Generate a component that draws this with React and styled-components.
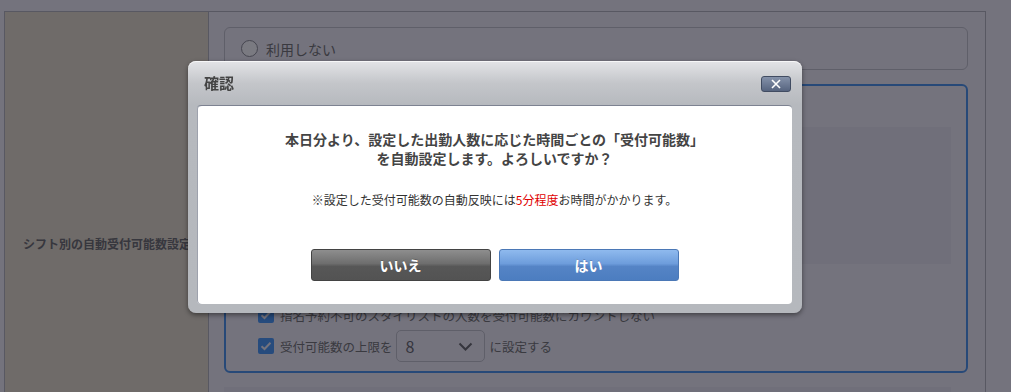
import React from "react";
import styled, { createGlobalStyle } from "styled-components";

const GlobalStyle = createGlobalStyle`
  html, body {
    margin: 0;
    padding: 0;
    background: #e8e6f0;
    font-family: "Noto Sans CJK JP", "Noto Sans", sans-serif;
    overflow: hidden;
  }
`;

const Page = styled.div`
  padding: 11px 0 0 4px;
`;

const Table = styled.div`
  width: 980px;
  display: flex;
  border: 1px solid #b0b0ba;
  border-bottom: none;
`;

const LabelCell = styled.div`
  width: 185px;
  flex-shrink: 0;
  padding: 0 0 0 18px;
  background: #ded6c8;
  border-right: 1px solid #b0b0ba;
  display: flex;
  align-items: center;
  white-space: nowrap;
  font-size: 12px;
  font-weight: bold;
  color: #6e6e72;
`;

const ValueCell = styled.div`
  flex: 1;
  padding: 15px 17px 15px 15px;
  display: flex;
  flex-direction: column;
  gap: 14px;
`;

const Panel = styled.div`
  border: ${(p) => (p.$active ? "2px solid #4f92e6" : "1px solid #bebec8")};
  border-radius: 6px;
  padding: ${(p) => p.$pad || "0 16px"};
  display: flex;
  flex-direction: column;
`;

const RadioRow = styled.label`
  display: flex;
  align-items: center;
  gap: 8px;
  height: ${(p) => p.$h || 41}px;
  font-size: 14px;
  color: #747476;
`;

const RadioCircle = styled.span`
  width: 15px;
  height: 15px;
  border-radius: 50%;
  border: 1px solid #8c8c96;
  background: #f4f4f8;
`;

const GrayBox = styled.div`
  height: ${(p) => p.$h || 137}px;
  margin: ${(p) => p.$margin || "9px 15px 6px -17px"};
  background: #e0deea;
`;

const CheckRow = styled.div`
  display: flex;
  align-items: center;
  gap: 6px;
  height: ${(p) => p.$h || 30}px;
  font-size: 12.5px;
  color: #747476;
  white-space: nowrap;
`;

const CheckBox = styled.span`
  width: 16px;
  height: 16px;
  border-radius: 2px;
  background: #4c96f0;
  display: flex;
  align-items: center;
  justify-content: center;
`;

const Select = styled.div`
  box-sizing: border-box;
  width: 89px;
  height: 32px;
  margin: 0 -1px 0 -3px;
  border: 1px solid #bebec8;
  border-radius: 5px;
  display: flex;
  align-items: center;
  justify-content: space-between;
  padding: 0 11px 0 9px;
  font-size: 16px;
  color: #6a6a70;
`;

const Overlay = styled.div`
  position: fixed;
  inset: 0;
  background: rgba(0, 0, 10, 0.5);
`;

const Dialog = styled.div`
  position: fixed;
  left: 188px;
  top: 61px;
  width: 614px;
  height: 252px;
  box-sizing: border-box;
  border-radius: 8px;
  background: linear-gradient(#e3e4e7 0px, #c4c6ca 22px, #b6b9be 44px, #b5b8bd 100%);
  box-shadow: 0 2px 5px rgba(0, 0, 0, 0.45), inset 0 1px 0 rgba(255, 255, 255, 0.7);
  display: flex;
  flex-direction: column;
  padding: 0 10px 9px 9px;
`;

const DialogHeader = styled.div`
  height: 44px;
  display: flex;
  align-items: center;
  justify-content: space-between;
  padding: 0 1px 0 7px;
`;

const DialogTitle = styled.div`
  font-size: 15px;
  font-weight: bold;
  color: #444;
  margin-top: -1px;
`;

const CloseButton = styled.button`
  width: 30px;
  height: 16px;
  padding: 0;
  border: 1px solid #414c62;
  border-radius: 3px;
  background: linear-gradient(#8592aa, #56647f);
  display: flex;
  align-items: center;
  justify-content: center;
  margin-top: 1px;
`;

const DialogBody = styled.div`
  flex: 1;
  background: #fff;
  border-radius: 4px;
  border-top: 1px solid #7d8291;
  box-shadow: inset 1px 0 0 #9ea2ad;
  display: flex;
  flex-direction: column;
  align-items: center;
  padding-top: 24px;
`;

const Message = styled.p`
  margin: 0;
  font-size: 14px;
  font-weight: bold;
  line-height: 19px;
  color: #444;
  text-align: center;
`;

const Note = styled.p`
  margin: 23px 0 0;
  font-size: 12px;
  line-height: 18px;
  color: #333;
  span {
    color: #e00000;
  }
`;

const ButtonRow = styled.div`
  display: flex;
  gap: 8px;
  margin-top: 40px;
`;

const Button = styled.button`
  width: 180px;
  height: 32px;
  border-radius: 3px;
  font-family: inherit;
  font-size: 14px;
  font-weight: bold;
  color: #fff;
  cursor: pointer;
  border: 1px solid ${(p) => (p.$primary ? "#4b78b6" : "#434343")};
  background: ${(p) =>
    p.$primary
      ? "linear-gradient(#8fbaee 0%, #6e9ddc 45%, #5584c6 55%, #4c7dc0 100%)"
      : "linear-gradient(#8e8e8e 0%, #6e6e6e 45%, #575757 55%, #535353 100%)"};
  text-shadow: 0 -1px 0 rgba(0, 0, 0, 0.2);
`;

const Check = () => (
  <CheckBox>
    <svg width="12" height="10" viewBox="0 0 12 10">
      <path d="M1.5 5.2 L4.5 8 L10.5 1.8" fill="none" stroke="#e8e6f0" strokeWidth="2" />
    </svg>
  </CheckBox>
);

export default function App() {
  return (
    <>
      <GlobalStyle />
      <Page>
        <Table>
          <LabelCell>シフト別の自動受付可能数設定</LabelCell>
          <ValueCell>
            <Panel>
              <RadioRow>
                <RadioCircle />
                利用しない
              </RadioRow>
            </Panel>
            <Panel $active $pad="12px 0 9px 32px">
              <RadioRow $h={20}>
                <RadioCircle />
                利用する
              </RadioRow>
              <GrayBox />
              <CheckRow>
                <Check />
                出勤人数に応じて受付可能数を自動設定する
              </CheckRow>
              <CheckRow>
                <Check />
                指名予約不可のスタイリストの人数を受付可能数にカウントしない
              </CheckRow>
              <CheckRow $h={32}>
                <Check />
                受付可能数の上限を
                <Select>
                  8
                  <svg width="15" height="9" viewBox="0 0 15 9">
                    <path d="M1.5 1.5 L7.5 7.5 L13.5 1.5" fill="none" stroke="#6a6a70" strokeWidth="2" />
                  </svg>
                </Select>
                に設定する
              </CheckRow>
            </Panel>
            <GrayBox $h={72} $margin="0 17px 0 0" />
          </ValueCell>
        </Table>
      </Page>
      <Overlay />
      <Dialog role="dialog">
        <DialogHeader>
          <DialogTitle>確認</DialogTitle>
          <CloseButton aria-label="閉じる">
            <svg width="10" height="10" viewBox="0 0 10 10">
              <path d="M1 1 L9 9 M9 1 L1 9" stroke="#fff" strokeWidth="1.6" />
            </svg>
          </CloseButton>
        </DialogHeader>
        <DialogBody>
          <Message>
            本日分より、設定した出勤人数に応じた時間ごとの「受付可能数」
            <br />
            を自動設定します。よろしいですか？
          </Message>
          <Note>
            ※設定した受付可能数の自動反映には<span>5分程度</span>お時間がかかります。
          </Note>
          <ButtonRow>
            <Button>いいえ</Button>
            <Button $primary>はい</Button>
          </ButtonRow>
        </DialogBody>
      </Dialog>
    </>
  );
}
